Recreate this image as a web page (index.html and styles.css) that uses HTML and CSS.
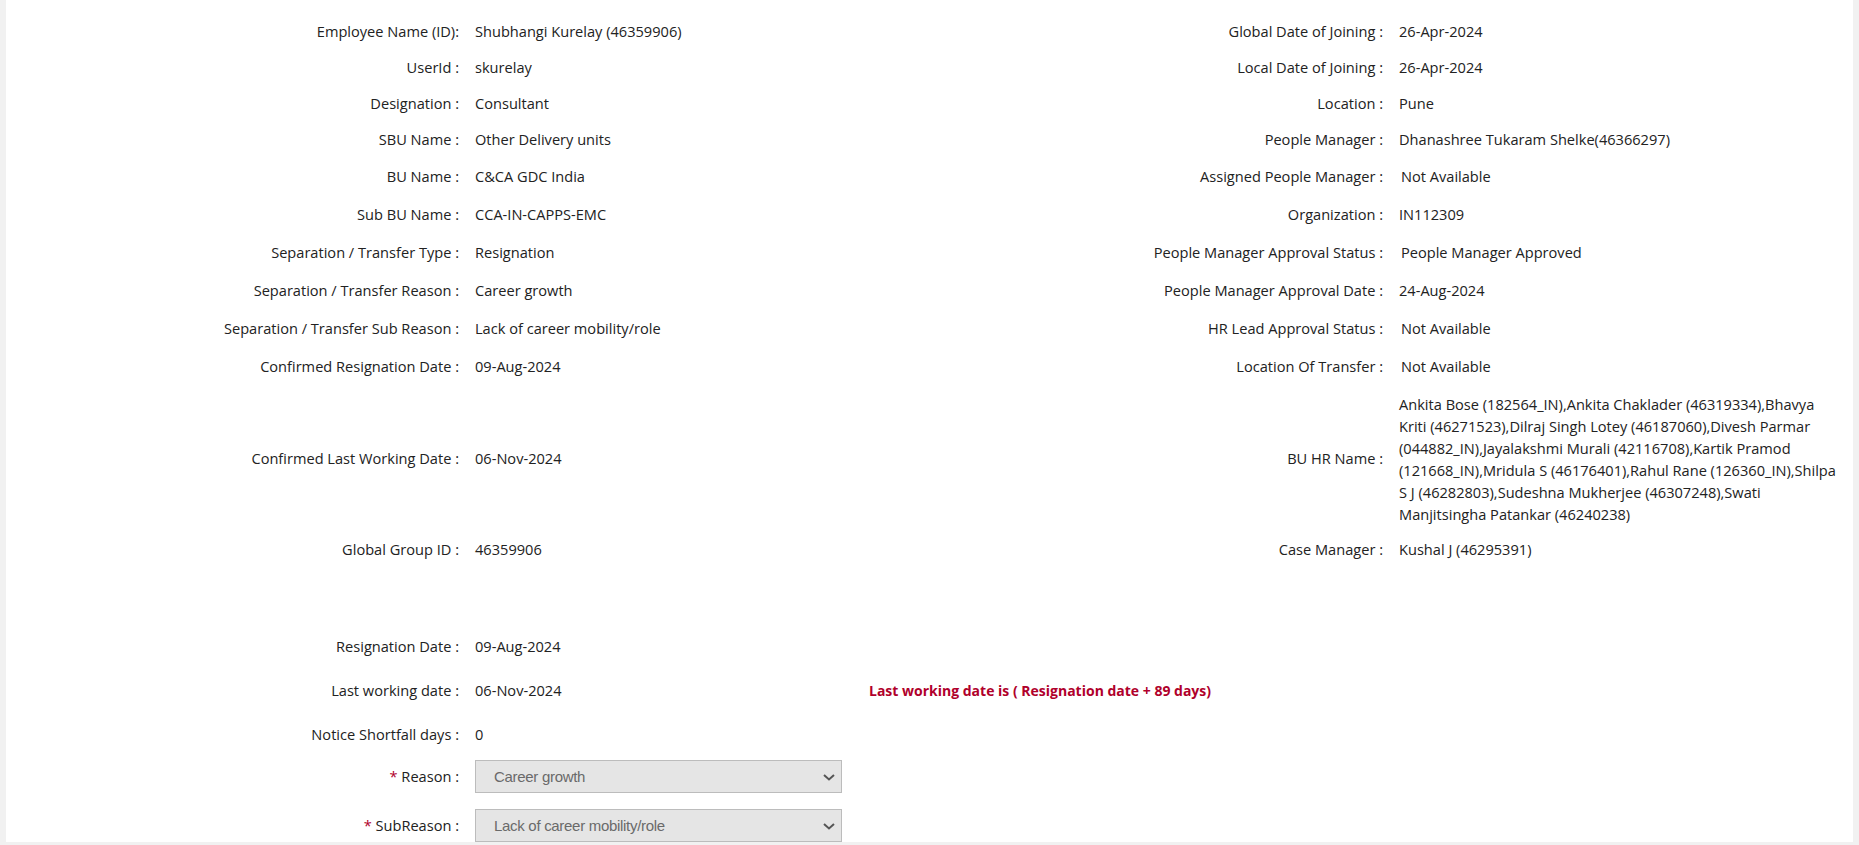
FILE: index.html
```html
<!DOCTYPE html>
<html lang="en">
<head>
<meta charset="utf-8">
<title>Separation Details</title>
<link rel="stylesheet" href="styles.css">
</head>
<body>
<div class="page">
  <div class="details">
    <div class="lbl">Employee Name (ID):</div><div class="val">Shubhangi Kurelay (46359906)</div>
    <div class="lbl">Global Date of Joining :</div><div class="val">26-Apr-2024</div>

    <div class="lbl">UserId :</div><div class="val">skurelay</div>
    <div class="lbl">Local Date of Joining :</div><div class="val">26-Apr-2024</div>

    <div class="lbl">Designation :</div><div class="val">Consultant</div>
    <div class="lbl">Location :</div><div class="val">Pune</div>

    <div class="lbl">SBU Name :</div><div class="val">Other Delivery units</div>
    <div class="lbl">People Manager :</div><div class="val">Dhanashree Tukaram Shelke(46366297)</div>

    <div class="lbl">BU Name :</div><div class="val">C&amp;CA GDC India</div>
    <div class="lbl">Assigned People Manager :</div><div class="val val-na">Not Available</div>

    <div class="lbl">Sub BU Name :</div><div class="val">CCA-IN-CAPPS-EMC</div>
    <div class="lbl">Organization :</div><div class="val">IN112309</div>

    <div class="lbl">Separation / Transfer Type :</div><div class="val">Resignation</div>
    <div class="lbl">People Manager Approval Status :</div><div class="val val-na">People Manager Approved</div>

    <div class="lbl">Separation / Transfer Reason :</div><div class="val">Career growth</div>
    <div class="lbl">People Manager Approval Date :</div><div class="val">24-Aug-2024</div>

    <div class="lbl">Separation / Transfer Sub Reason :</div><div class="val">Lack of career mobility/role</div>
    <div class="lbl">HR Lead Approval Status :</div><div class="val val-na">Not Available</div>

    <div class="lbl">Confirmed Resignation Date :</div><div class="val">09-Aug-2024</div>
    <div class="lbl">Location Of Transfer :</div><div class="val val-na">Not Available</div>

    <div class="lbl">Confirmed Last Working Date :</div><div class="val">06-Nov-2024</div>
    <div class="lbl">BU HR Name :</div><div class="val val-long">Ankita Bose (182564_IN),Ankita Chaklader (46319334),Bhavya<br>Kriti (46271523),Dilraj Singh Lotey (46187060),Divesh Parmar<br>(044882_IN),Jayalakshmi Murali (42116708),Kartik Pramod<br>(121668_IN),Mridula S (46176401),Rahul Rane (126360_IN),Shilpa<br>S J (46282803),Sudeshna Mukherjee (46307248),Swati<br>Manjitsingha Patankar (46240238)</div>

    <div class="lbl">Global Group ID :</div><div class="val">46359906</div>
    <div class="lbl">Case Manager :</div><div class="val">Kushal J (46295391)</div>
  </div>

  <div class="resign">
    <div class="rrow">
      <div class="lbl">Resignation Date :</div><div class="val">09-Aug-2024</div>
    </div>
    <div class="rrow">
      <div class="lbl">Last working date :</div><div class="val">06-Nov-2024</div>
      <div class="note">Last working date is ( Resignation date + 89 days)</div>
    </div>
    <div class="rrow">
      <div class="lbl">Notice Shortfall days :</div><div class="val">0</div>
    </div>
    <div class="rrow rrow-select">
      <label class="lbl" for="reason"><span class="req">*</span> Reason :</label>
      <div class="select-wrap">
        <select id="reason" class="select" disabled>
          <option>Career growth</option>
        </select>
        <svg class="chev" width="12" height="7" viewBox="0 0 12 7"><path d="M1 1l5 4.5L11 1" fill="none" stroke="#555" stroke-width="2"/></svg>
      </div>
    </div>
    <div class="rrow rrow-select">
      <label class="lbl" for="subreason"><span class="req">*</span> SubReason :</label>
      <div class="select-wrap">
        <select id="subreason" class="select" disabled>
          <option>Lack of career mobility/role</option>
        </select>
        <svg class="chev" width="12" height="7" viewBox="0 0 12 7"><path d="M1 1l5 4.5L11 1" fill="none" stroke="#555" stroke-width="2"/></svg>
      </div>
    </div>
  </div>
</div>
</body>
</html>
```

FILE: styles.css
```css
html, body {
  margin: 0;
  padding: 0;
}

body {
  background: #f1f1f1;
  font-family: "Open Sans", "Noto Sans", "DejaVu Sans", sans-serif;
  font-size: 14.6px;
  font-weight: 500;
  color: #222;
  overflow: hidden;
}

.page {
  margin: 0 6px;
  height: 842px;
  background: #fff;
  overflow: hidden;
  padding-top: 13.7px;
  box-sizing: border-box;
}

.details {
  display: grid;
  grid-template-columns: 453px 439px 453px 441px;
  grid-template-rows: repeat(4, 36px) repeat(6, 38px) auto 38px;
  column-gap: 16px;
  align-items: center;
}

.lbl {
  text-align: right;
  line-height: 21px;
  white-space: nowrap;
}

.val {
  line-height: 21px;
  white-space: nowrap;
}

.val-na {
  padding-left: 2px;
}

.val-long {
  line-height: 22px;
  padding: 7px 0 6px;
}

.resign {
  margin-top: 56px;
}

.rrow {
  display: grid;
  grid-template-columns: 453px 367px auto;
  column-gap: 16px;
  align-items: center;
  height: 44px;
}

.rrow-select {
  height: 33px;
  padding: 3.5px 0 12px;
}

.note {
  margin-left: 11px;
  color: #b0002b;
  font-weight: 700;
  font-size: 14px;
  white-space: nowrap;
}

.req {
  color: #b0002b;
}

.select-wrap {
  position: relative;
  height: 33px;
}

.select {
  -webkit-appearance: none;
  appearance: none;
  display: block;
  width: 100%;
  height: 33px;
  margin: 0;
  padding: 0 30px 0 18px;
  box-sizing: border-box;
  background: #e5e5e5;
  border: 1px solid #bcbcbc;
  border-radius: 0;
  color: #6a6a6a;
  font-family: "Liberation Sans", Arial, sans-serif;
  font-size: 15px;
  font-weight: 400;
  letter-spacing: -0.3px;
  opacity: 1;
}

.chev {
  position: absolute;
  right: 7px;
  top: 14px;
  pointer-events: none;
}
```
